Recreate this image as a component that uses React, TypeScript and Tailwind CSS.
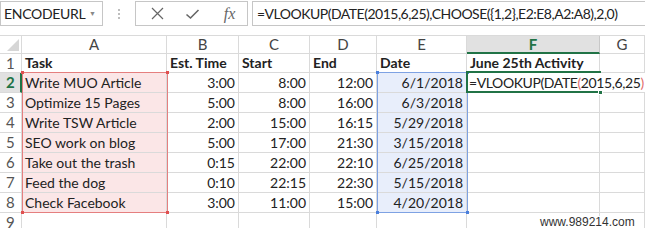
import React from "react";

const FONT = { fontFamily: "Lato, 'Open Sans', sans-serif" };

const rows: string[][] = [
  ["Task", "Est. Time", "Start", "End", "Date", "June 25th Activity", ""],
  ["Write MUO Article", "3:00", "8:00", "12:00", "6/1/2018", "", ""],
  ["Optimize 15 Pages", "5:00", "8:00", "16:00", "6/3/2018", "", ""],
  ["Write TSW Article", "2:00", "15:00", "16:15", "5/29/2018", "", ""],
  ["SEO work on blog", "5:00", "17:00", "21:30", "3/15/2018", "", ""],
  ["Take out the trash", "0:15", "22:00", "22:10", "6/25/2018", "", ""],
  ["Feed the dog", "0:10", "22:15", "22:30", "5/15/2018", "", ""],
  ["Check Facebook", "3:00", "11:00", "15:00", "4/20/2018", "", ""],
  ["", "", "", "", "", "", ""],
];

const cols = ["A", "B", "C", "D", "E", "F", "G"];

function FormulaBar() {
  return (
    <div className="flex items-start h-[35px] pt-[1px] text-[14px] text-[#222]">
      <div className="w-[103px] h-[25px] border border-[#c6c6c6] flex items-center pl-[3px] pr-[6px] justify-between">
        <span className="tracking-[-0.3px]">ENCODEURL</span>
        <span className="text-[7px] text-[#888] leading-none">▼</span>
      </div>
      <div className="w-[32px] h-[25px] flex items-center justify-center">
        <svg width="4" height="12" viewBox="0 0 4 12">
          <circle cx="2" cy="2" r="1" fill="#a8a8a8" />
          <circle cx="2" cy="6" r="1" fill="#a8a8a8" />
          <circle cx="2" cy="10" r="1" fill="#a8a8a8" />
        </svg>
      </div>
      <div className="w-[113px] h-[25px] border border-[#c6c6c6] flex items-center">
        <div className="w-[36px] flex justify-center pl-[6px]">
          <svg width="13" height="13" viewBox="0 0 13 13">
            <path d="M1 1 L12 12 M12 1 L1 12" stroke="#666" strokeWidth="1.2" />
          </svg>
        </div>
        <div className="w-[40px] flex justify-center">
          <svg width="15" height="12" viewBox="0 0 15 12">
            <path d="M1.5 6.5 L5.5 10 L13.5 2" stroke="#666" strokeWidth="1.6" fill="none" />
          </svg>
        </div>
        <div
          className="flex-1 flex justify-center italic text-[16px] text-[#666]"
          style={{ fontFamily: "'Liberation Serif', serif" }}
        >
          fx
        </div>
      </div>
      <div className="ml-[4px] flex-1 h-[25px] border-l border-t border-b border-[#c6c6c6] flex items-center pl-[4px] whitespace-nowrap overflow-hidden tracking-[-0.5px]">
        =VLOOKUP(DATE(2015,6,25),CHOOSE({"{"}1,2{"}"},E2:E8,A2:A8),2,0)
      </div>
    </div>
  );
}

function Grid() {
  const line = "border-[#dadada]";
  return (
    <div className="relative">
      <div className="grid grid-cols-[22px_145px_72px_71px_67px_90px_133px_45px] grid-rows-[18px_19px_repeat(8,20px)] text-[14px] text-[#222] border-t border-[#dadada]">
        {/* header row */}
        <div className={`border-r border-b ${line} relative`}>
          <svg className="absolute right-[2px] bottom-[2px]" width="12" height="12" viewBox="0 0 12 12">
            <polygon points="12,0 12,12 0,12" fill="#d6d6d6" />
          </svg>
        </div>
        {cols.map((c) =>
          c === "F" ? (
            <div
              key={c}
              className="bg-[#e1e1e1] border-r border-[#c8c8c8] border-b-2 border-b-[#217346] flex items-center justify-center text-[15px] text-[#217346] font-bold leading-none"
            >
              {c}
            </div>
          ) : (
            <div
              key={c}
              className={`border-r border-b ${line} flex items-center justify-center text-[15px] text-[#444] leading-none`}
            >
              {c}
            </div>
          )
        )}
        {rows.map((r, ri) => {
          const rowNum = ri + 1;
          const isActive = rowNum === 2;
          const cells = [
            <div
              key="h"
              className={
                isActive
                  ? "bg-[#e1e1e1] border-b border-[#dadada] border-r-2 border-r-[#217346] flex items-center pl-[6px] text-[15px] text-[#217346] font-bold leading-none"
                  : `border-r border-b ${line} flex items-center pl-[6px] text-[15px] text-[#555] leading-none`
              }
            >
              {rowNum}
            </div>,
          ];
          r.forEach((v, ci) => {
            const inA = ci === 0 && rowNum >= 2 && rowNum <= 8;
            const inE = ci === 4 && rowNum >= 2 && rowNum <= 8;
            const bg = inA ? "bg-[#fbe6e7]" : inE ? "bg-[#e8eefb]" : "";
            const right = rowNum >= 2 && ci >= 1 && ci <= 4;
            const bold = rowNum === 1;
            if (rowNum === 2 && ci === 5) {
              cells.push(
                <div key={ci} className={`relative border-r border-b ${line}`}>
                  <span className="absolute left-[2px] top-0 h-[19px] flex items-center whitespace-nowrap bg-white z-10 pr-[20px] tracking-[-0.4px]">
                    =VLOOKUP(DATE<span className="text-[#e26b6b]">(</span>2015,6,25
                    <span className="text-[#e26b6b]">)</span>
                  </span>
                </div>
              );
              return;
            }
            cells.push(
              <div
                key={ci}
                className={`border-r border-b ${line} ${bg} flex items-center whitespace-nowrap overflow-hidden leading-none ${
                  right ? "justify-end pr-[3px]" : "pl-[3px]"
                } ${bold ? "font-bold" : ""}`}
              >
                {v}
              </div>
            );
          });
          return <React.Fragment key={ri}>{cells}</React.Fragment>;
        })}
      </div>

      {/* A2:A8 reference highlight */}
      <div className="absolute left-[22px] top-[37px] w-[146px] h-[141px] border border-[#e57f7f] pointer-events-none">
        <div className="absolute -left-[2px] -top-[2px] w-[3px] h-[3px] bg-[#e05050]" />
        <div className="absolute -right-[2px] -top-[2px] w-[3px] h-[3px] bg-[#e05050]" />
        <div className="absolute -left-[2px] -bottom-[2px] w-[3px] h-[3px] bg-[#e05050]" />
        <div className="absolute -right-[2px] -bottom-[2px] w-[3px] h-[3px] bg-[#e05050]" />
      </div>
      {/* E2:E8 reference highlight */}
      <div className="absolute left-[377px] top-[37px] w-[91px] h-[141px] border border-[#7ea2e3] pointer-events-none">
        <div className="absolute -left-[2px] -top-[2px] w-[3px] h-[3px] bg-[#4a7fdc]" />
        <div className="absolute -right-[2px] -top-[2px] w-[3px] h-[3px] bg-[#4a7fdc]" />
        <div className="absolute -left-[2px] -bottom-[2px] w-[3px] h-[3px] bg-[#4a7fdc]" />
        <div className="absolute -right-[2px] -bottom-[2px] w-[3px] h-[3px] bg-[#4a7fdc]" />
      </div>
      {/* F2 active cell */}
      <div className="absolute left-[466px] top-[36px] w-[135px] h-[2px] bg-[#217346] z-20" />
      <div className="absolute left-[466px] top-[56px] w-[135px] h-[2px] bg-[#217346] z-20" />
      <div className="absolute left-[466px] top-[36px] w-[2px] h-[22px] bg-[#217346] z-20" />
      <div className="absolute left-[598px] top-[55px] w-[5px] h-[5px] bg-[#217346] border border-white z-20" />
    </div>
  );
}

export default function App() {
  return (
    <div className="w-[645px] h-[228px] bg-white overflow-hidden relative" style={FONT}>
      <FormulaBar />
      <Grid />
      <div
        className="absolute left-[538px] top-[216px] bg-white px-[2px] text-[12px] leading-[12px] text-[#333] z-30"
        style={{ fontFamily: "'Liberation Sans', Arial, sans-serif" }}
      >
        www.989214.com
      </div>
    </div>
  );
}
